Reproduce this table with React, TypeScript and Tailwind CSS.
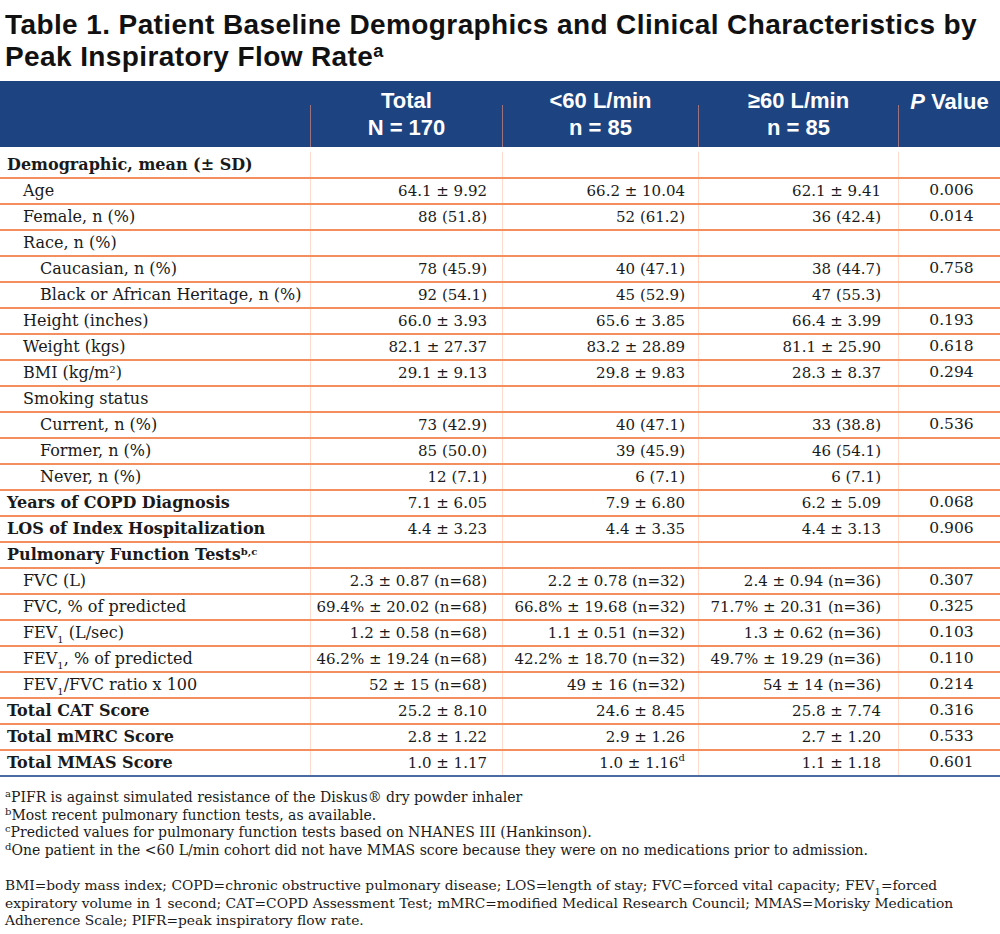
import React from "react";

type Row = {
    label: React.ReactNode;
    indent?: 0 | 1 | 2;
    bold?: boolean;
    vals?: [React.ReactNode, React.ReactNode, React.ReactNode, React.ReactNode];
    first?: boolean;
    last?: boolean;
};

const FEV = () => (
    <>
        FEV<sub className="text-[10px] align-[-2px] leading-none">1</sub>
    </>
);

const rows: Row[] = [
    { label: "Demographic, mean (± SD)", bold: true, first: true },
    { label: "Age", indent: 1, vals: ["64.1 ± 9.92", "66.2 ± 10.04", "62.1 ± 9.41", "0.006"] },
    { label: "Female, n (%)", indent: 1, vals: ["88 (51.8)", "52 (61.2)", "36 (42.4)", "0.014"] },
    { label: "Race, n (%)", indent: 1 },
    { label: "Caucasian, n (%)", indent: 2, vals: ["78 (45.9)", "40 (47.1)", "38 (44.7)", "0.758"] },
    { label: "Black or African Heritage, n (%)", indent: 2, vals: ["92 (54.1)", "45 (52.9)", "47 (55.3)", ""] },
    { label: "Height (inches)", indent: 1, vals: ["66.0 ± 3.93", "65.6 ± 3.85", "66.4 ± 3.99", "0.193"] },
    { label: "Weight (kgs)", indent: 1, vals: ["82.1 ± 27.37", "83.2 ± 28.89", "81.1 ± 25.90", "0.618"] },
    {
        label: (
            <>
                BMI (kg/m<sup className="text-[10px]">2</sup>)
            </>
        ),
        indent: 1,
        vals: ["29.1 ± 9.13", "29.8 ± 9.83", "28.3 ± 8.37", "0.294"],
    },
    { label: "Smoking status", indent: 1 },
    { label: "Current, n (%)", indent: 2, vals: ["73 (42.9)", "40 (47.1)", "33 (38.8)", "0.536"] },
    { label: "Former, n (%)", indent: 2, vals: ["85 (50.0)", "39 (45.9)", "46 (54.1)", ""] },
    { label: "Never, n (%)", indent: 2, vals: ["12 (7.1)", "6 (7.1)", "6 (7.1)", ""] },
    { label: "Years of COPD Diagnosis", bold: true, vals: ["7.1 ± 6.05", "7.9 ± 6.80", "6.2 ± 5.09", "0.068"] },
    { label: "LOS of Index Hospitalization", bold: true, vals: ["4.4 ± 3.23", "4.4 ± 3.35", "4.4 ± 3.13", "0.906"] },
    {
        label: (
            <>
                Pulmonary Function Tests<sup className="text-[10px]">b,c</sup>
            </>
        ),
        bold: true,
    },
    { label: "FVC (L)", indent: 1, vals: ["2.3 ± 0.87 (n=68)", "2.2 ± 0.78 (n=32)", "2.4 ± 0.94 (n=36)", "0.307"] },
    {
        label: "FVC, % of predicted",
        indent: 1,
        vals: ["69.4% ± 20.02 (n=68)", "66.8% ± 19.68 (n=32)", "71.7% ± 20.31 (n=36)", "0.325"],
    },
    {
        label: (
            <>
                <FEV /> (L/sec)
            </>
        ),
        indent: 1,
        vals: ["1.2 ± 0.58 (n=68)", "1.1 ± 0.51 (n=32)", "1.3 ± 0.62 (n=36)", "0.103"],
    },
    {
        label: (
            <>
                <FEV />, % of predicted
            </>
        ),
        indent: 1,
        vals: ["46.2% ± 19.24 (n=68)", "42.2% ± 18.70 (n=32)", "49.7% ± 19.29 (n=36)", "0.110"],
    },
    {
        label: (
            <>
                <FEV />/FVC ratio x 100
            </>
        ),
        indent: 1,
        vals: ["52 ± 15 (n=68)", "49 ± 16 (n=32)", "54 ± 14 (n=36)", "0.214"],
    },
    { label: "Total CAT Score", bold: true, vals: ["25.2 ± 8.10", "24.6 ± 8.45", "25.8 ± 7.74", "0.316"] },
    { label: "Total mMRC Score", bold: true, vals: ["2.8 ± 1.22", "2.9 ± 1.26", "2.7 ± 1.20", "0.533"] },
    {
        label: "Total MMAS Score",
        bold: true,
        last: true,
        vals: [
            "1.0 ± 1.17",
            <>
                1.0 ± 1.16<sup className="text-[10px]">d</sup>
            </>,
            "1.1 ± 1.18",
            "0.601",
        ],
    },
];

const HeadCell: React.FC<{ w: string; children: React.ReactNode }> = ({ w, children }) => (
    <div className={`flex ${w}`}>
        <div className="mt-[24px] w-px bg-[#9a7280]" />
        <div className="flex flex-1 flex-col items-center justify-center text-center">{children}</div>
    </div>
);

const App: React.FC = () => {
    return (
        <div className="w-[1000px] h-[934px] bg-white text-black">
            <h1 className="pl-[5px] pt-[9px] font-['Liberation_Sans',Arial,sans-serif] text-[28px] font-bold leading-[32px] tracking-[0.4px] text-[#111]">
                Table 1. Patient Baseline Demographics and Clinical Characteristics by
                <br />
                Peak Inspiratory Flow Rate<sup className="text-[18px]">a</sup>
            </h1>

            <div className="mt-[8px] flex h-[66px] bg-[#1d4380] font-['Liberation_Sans',Arial,sans-serif] text-[22px] font-bold leading-[27px] text-white">
                <div className="w-[310px]" />
                <HeadCell w="w-[192px]">
                    <span>Total</span>
                    <span>N = 170</span>
                </HeadCell>
                <HeadCell w="w-[196px]">
                    <span>&lt;60 L/min</span>
                    <span>n = 85</span>
                </HeadCell>
                <HeadCell w="w-[200px]">
                    <span>≥60 L/min</span>
                    <span>n = 85</span>
                </HeadCell>
                <div className="flex w-[102px]">
                    <div className="mt-[24px] w-px bg-[#9a7280]" />
                    <div className="flex flex-1 justify-center pt-[7px]">
                        <span>
                            <i>P</i> Value
                        </span>
                    </div>
                </div>
            </div>

            <div className="font-['DejaVu_Serif',serif] text-[16px] text-[#1a1a1a]">
                {rows.map((r, i) => {
                    const border = r.last ? "border-b-2 border-[#4a6aa3]" : "border-b-2 border-[#f58e5e]";
                    const height = r.first ? "h-[32px] pt-[5px]" : "h-[26px]";
                    const pad = r.indent === 2 ? "pl-[40px]" : r.indent === 1 ? "pl-[23px]" : "pl-[7px]";
                    const v = r.vals ?? ["", "", "", ""];
                    return (
                        <div key={i} className={`flex ${height} ${border}`}>
                            <div className={`flex w-[310px] items-center whitespace-nowrap ${pad} ${r.bold ? "font-bold" : ""}`}>
                                <span>{r.label}</span>
                            </div>
                            <div className="flex w-[192px] items-center justify-end border-l border-[#fddccb] pr-[15px] text-[15px] whitespace-nowrap">
                                {v[0]}
                            </div>
                            <div className="flex w-[196px] items-center justify-end border-l border-[#fddccb] pr-[13px] text-[15px] whitespace-nowrap">
                                {v[1]}
                            </div>
                            <div className="flex w-[200px] items-center justify-end border-l border-[#fddccb] pr-[17px] text-[15px] whitespace-nowrap">
                                {v[2]}
                            </div>
                            <div className="flex w-[102px] items-center justify-center border-l border-[#fddccb] pl-[4px] text-[15.5px]">
                                {v[3]}
                            </div>
                        </div>
                    );
                })}
            </div>

            <div className="mt-[12px] pl-[5px] font-['DejaVu_Serif',serif] text-[14px] leading-[17.5px] text-[#1a1a1a]">
                <p>
                    <sup className="text-[10px]">a</sup>PIFR is against simulated resistance of the Diskus® dry powder inhaler
                </p>
                <p>
                    <sup className="text-[10px]">b</sup>Most recent pulmonary function tests, as available.
                </p>
                <p>
                    <sup className="text-[10px]">c</sup>Predicted values for pulmonary function tests based on NHANES III (Hankinson).
                </p>
                <p>
                    <sup className="text-[10px]">d</sup>One patient in the &lt;60 L/min cohort did not have MMAS score because they were on no
                    medications prior to admission.
                </p>
                <p className="mt-[18px] whitespace-nowrap text-[13.8px]">
                    BMI=body mass index; COPD=chronic obstructive pulmonary disease; LOS=length of stay; FVC=forced vital capacity;{" "}
                    <FEV />
                    =forced
                    <br />
                    expiratory volume in 1 second; CAT=COPD Assessment Test; mMRC=modified Medical Research Council; MMAS=Morisky
                    Medication
                    <br />
                    Adherence Scale; PIFR=peak inspiratory flow rate.
                </p>
            </div>
        </div>
    );
};

export default App;
